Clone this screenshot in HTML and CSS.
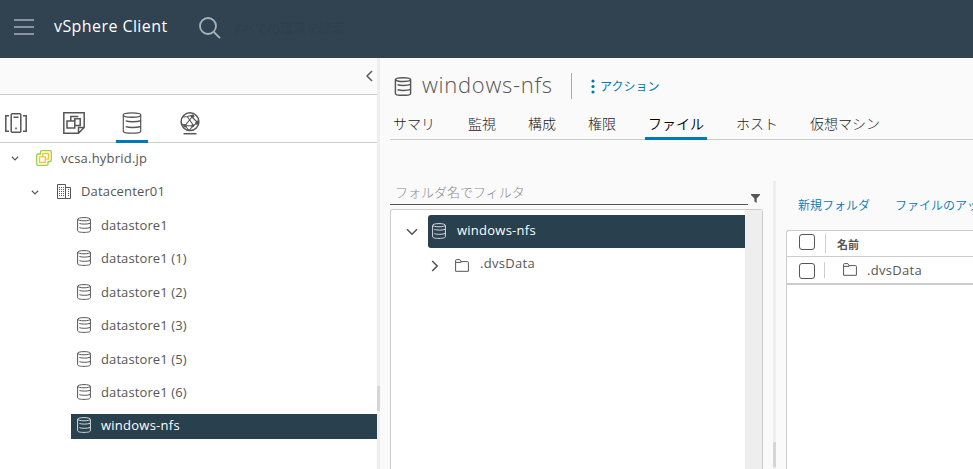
FILE: index.html
```html
<!DOCTYPE html>
<html lang="ja">
<head>
<meta charset="utf-8">
<title>vSphere Client</title>
<link rel="stylesheet" href="styles.css">
</head>
<body>
<svg class="defs" aria-hidden="true">
  <symbol id="store" viewBox="0 0 14 16">
    <ellipse cx="7" cy="2.200" rx="6.400" ry="1.600"/>
    <path d="M.6 2.200v11.600c0 1 2.600 1.600 6.400 1.600s6.400-.6 6.400-1.600V2.200M2.400 6.500c2.400.8 8 .9 11-.3M2.400 10.700c2.400.8 8 .9 11-.3"/>
  </symbol>
  <symbol id="folder" viewBox="0 0 14 13">
    <path d="M.6 12.300V1.500c0-.5.3-.9.8-.9h3.400l1.300 2h6.500c.5 0 .8.3.8.8v8.900zM1 3.400h5.100V2.600"/>
  </symbol>
  <symbol id="down" viewBox="0 0 12 8"><path d="M1 1.200l5 5 5-5"/></symbol>
</svg>
<header class="topbar">
  <svg class="burger" viewBox="0 0 20 16"><path d="M0 1h20M0 8h20M0 15h20"/></svg>
  <span class="brand">vSphere Client</span>
  <svg class="search" viewBox="0 0 22 22"><circle cx="9" cy="9" r="8"/><path d="M14.800 15l6.200 6.200"/></svg>
  <span class="hint">すべての環境を検索</span>
</header>
<div class="body">
  <aside class="side">
    <div class="collapse"><svg viewBox="0 0 7 12"><path d="M6 1L1 6l5 5"/></svg></div>
    <nav class="views">
      <span class="view"><svg class="i-hosts" viewBox="0 0 22 20"><path d="M4 2.700H.8v15.600H4M18 2.700h3.200v15.600H18"/><rect x="6.200" y=".8" width="9.600" height="18.400" rx="1"/><path d="M8.500 4.200h5M11 14.500v2"/></svg></span>
      <span class="view"><svg class="i-vms" viewBox="0 0 22 22"><path d="M.8.800h20.400v14.700L15.500 21.200H.8zM15.500 21v-5.500H21M7.800 9V4.500h7.500M11.800 13.500h5.400V6.800h-5.400V9"/><rect x="4" y="9" width="7.800" height="7"/></svg></span>
      <span class="view on"><svg class="i-store" viewBox="0 0 14 16"><use href="#store"/></svg></span>
      <span class="view"><svg class="i-net" viewBox="0 0 20 23"><circle cx="10" cy="9.700" r="8.900"/><path d="M3.500 21.700h13"/><path class="thin" d="M3.200 5l4-.5L13.500 3M7.200 4.500l6 8.500M1.500 12l3.500 1.500 7-8.500M5 13.500l8 .5 4.500-3.500 1-3M12 5l5.500 5.500M5 13.500l4 5 4-4.500"/><circle class="dot" cx="12.500" cy="4.200" r="1.800"/><circle class="dot" cx="17" cy="11" r="1.800"/><circle class="dot" cx="5" cy="13.700" r="1.800"/><circle class="dot" cx="12.700" cy="13.800" r="1.500"/></svg></span>
    </nav>
    <div class="tree">
      <div class="row root"><svg class="caret"><use href="#down"/></svg><svg class="vc" viewBox="0 0 16 16"><path class="g" d="M4.500 4V2Q4.500.7 5.800.7h8.200q1.300 0 1.300 1.300v8.200q0 1.300-1.300 1.300H12v2.500q0 1.300-1.300 1.300H2Q.7 15.300.7 14V5.300Q.7 4 2 4z"/><path class="y" d="M6.800 6.800V3.500h5.700v5.700H9.300M3.500 6.800h5.800v5.700H3.500z"/></svg><span>vcsa.hybrid.jp</span></div>
      <div class="row dc"><svg class="caret"><use href="#down"/></svg><svg class="bldg" viewBox="0 0 14 15"><path d="M.5 14.500V.5h8v14zM8.500 3.500h5v11h-5"/><path class="win" d="M2.500 3v9M4.500 3v9M6.500 3v9M11.500 5v8"/></svg><span>Datacenter01</span></div>
      <div class="row ds"><svg class="st"><use href="#store"/></svg><span>datastore1</span></div>
      <div class="row ds"><svg class="st"><use href="#store"/></svg><span>datastore1 (1)</span></div>
      <div class="row ds"><svg class="st"><use href="#store"/></svg><span>datastore1 (2)</span></div>
      <div class="row ds"><svg class="st"><use href="#store"/></svg><span>datastore1 (3)</span></div>
      <div class="row ds"><svg class="st"><use href="#store"/></svg><span>datastore1 (5)</span></div>
      <div class="row ds"><svg class="st"><use href="#store"/></svg><span>datastore1 (6)</span></div>
      <div class="row ds sel"><svg class="st"><use href="#store"/></svg><span>windows-nfs</span></div>
    </div>
  </aside>
  <div class="split main-split"><i></i></div>
  <main class="main">
    <div class="title">
      <svg class="t-ico"><use href="#store"/></svg>
      <h1>windows-nfs</h1>
      <a class="actions"><svg viewBox="0 0 4 15"><circle cx="2" cy="2" r="1.600"/><circle cx="2" cy="7.500" r="1.600"/><circle cx="2" cy="13" r="1.600"/></svg>アクション</a>
    </div>
    <nav class="tabs"><a>サマリ</a><a>監視</a><a>構成</a><a>権限</a><a class="on">ファイル</a><a>ホスト</a><a>仮想マシン</a></nav>
    <div class="files">
      <section class="left">
        <div class="filter"><span class="field">フォルダ名でフィルタ</span><svg viewBox="0 0 9 9"><path d="M0 0h9v1L5.700 4.500V9L3.400 7.500v-3L0 1z"/></svg></div>
        <div class="ftree">
          <div class="fitems">
            <div class="frow"><svg class="fcaret"><use href="#down"/></svg><div class="fsel"><svg class="st"><use href="#store"/></svg><span>windows-nfs</span></div></div>
            <div class="frow child"><svg class="right" viewBox="0 0 8 12"><path d="M1.200 1l5 5-5 5"/></svg><svg class="fold"><use href="#folder"/></svg><span>.dvsData</span></div>
          </div>
          <div class="sbar"></div>
        </div>
      </section>
      <div class="split file-split"><i></i></div>
      <section class="right-pane">
        <div class="links"><a>新規フォルダ</a><a>ファイルのアップロード</a></div>
        <div class="grid">
          <div class="ghead"><b class="box"></b><i class="sep"></i><strong>名前</strong></div>
          <div class="grow"><b class="box"></b><i class="sep"></i><svg class="fold"><use href="#folder"/></svg><span>.dvsData</span></div>
        </div>
      </section>
    </div>
  </main>
</div>
</body>
</html>
```
FILE: styles.css
```css
* { box-sizing: border-box; }
body {
  margin: 0;
  width: 973px;
  height: 469px;
  overflow: hidden;
  display: flex;
  flex-direction: column;
  background: #fafafa;
  color: #565656;
  font: 13px "Open Sans", "Noto Sans CJK JP", sans-serif;
  white-space: nowrap;
}
svg { flex: none; fill: none; stroke: #565656; stroke-width: 1.2; display: block; }
.defs { position: absolute; width: 0; height: 0; }

.topbar { height: 58px; flex: none; background: #314351; display: flex; align-items: center; padding: 0 14px 4px; }
.burger { width: 20px; height: 16px; stroke: #a5afb6; stroke-width: 1.500; }
.brand { margin: -2px 0 0 20px; width: 145px; color: #fff; font-size: 16px; letter-spacing: .42px; }
.search { width: 22px; height: 22px; stroke: #a9b3ba; stroke-width: 1.800; margin-top: 2px; }
.hint { margin-left: 10px; color: #2e404d; font-size: 12.700px; }

.body { flex: 1; min-height: 0; display: flex; }
.side { width: 377px; background: #fff; display: flex; flex-direction: column; }
.collapse { height: 37px; background: #fafafa; border-bottom: 1px solid #ccc; display: flex; justify-content: flex-end; align-items: center; padding-right: 4px; }
.collapse svg { width: 7px; height: 12px; stroke-width: 1.500; }
.views { height: 48px; border-bottom: 1px solid #ccc; display: flex; gap: 26px; }
.view { width: 32px; height: 48px; display: flex; justify-content: center; align-items: center; padding-top: 8px; }
.view.on { border-bottom: 3px solid #0079b8; padding-top: 10px; }
.view svg { stroke-width: 1.500; }
.i-hosts { width: 22px; height: 20px; }
.i-vms { width: 22px; height: 22px; }
.view .i-store { width: 20px; height: 22px; stroke-width: 1; }
.i-net { width: 20px; height: 23px; }
.view:last-child { padding-top: 9px; }
.thin { stroke-width: 1.100; }
.dot { fill: #565656; stroke: none; }

.tree { padding-top: 3.800px; display: grid; grid-auto-rows: 25px; row-gap: 8.400px; }
.row { display: flex; align-items: center; }
.row span { margin: -2px 0 0 10px; letter-spacing: .1px; }
.caret { width: 8px; height: 5px; stroke-width: 1.800; }
.root { padding-left: 11px; }
.vc { width: 16px; height: 16px; margin: -2px 0 0 17px; stroke-width: 1.300; }
.g { stroke: #9bd04b; }
.y { stroke: #f7c52b; }
.root .caret, .dc .caret { margin-top: -1px; }
.root span { margin-left: 9px; letter-spacing: .22px; }
.dc { padding-left: 31px; }
.bldg { width: 14px; height: 15px; margin: -3px 0 0 18px; stroke-width: 1; }
.dc span { letter-spacing: .16px; margin-top: -3px; }
.win { stroke-dasharray: 1 1; }
.ds { margin-left: 71px; padding-left: 6px; }
.st { width: 14px; height: 16px; stroke-width: 1; margin-top: -2px; }
.sel { background: #29404e; color: #fff; }
.sel span { letter-spacing: .25px; }
.sel .st, .fsel .st { stroke: #d5dade; }

.split { width: 3px; background: #eee; flex: none; }
.split i { display: block; height: 25px; background: #d5d5d5; }
.main-split { padding-top: 328px; }

.main { flex: 1; min-width: 0; padding-left: 10px; display: flex; flex-direction: column; }
.title { height: 48px; display: flex; align-items: center; padding: 8px 0 0 4px; }
.t-ico { width: 18px; height: 19px; margin-top: 1px; }
h1 { margin: 0 0 0 10px; width: 150px; height: 26px; line-height: 23px; border-right: 1px solid #aaa; font-size: 22px; font-weight: 300; letter-spacing: .72px; }
.actions { margin-left: 19px; display: flex; gap: 5px; align-items: center; color: #0079b8; font-size: 12px; }
.actions svg { width: 4px; height: 15px; fill: #0079b8; stroke: none; }
.tabs { height: 34px; border-bottom: 1px solid #ccc; display: flex; gap: 26px; font-size: 14px; font-weight: 300; line-height: 36px; color: #222; }
.tabs a { height: 34px; padding: 0 3px; }
.tabs a:nth-child(n+2) { position: relative; left: 1px; }
.tabs .on { color: #000; font-weight: 350; border-bottom: 3px solid #0079b8; }

.files { flex: 1; min-height: 0; padding-top: 41px; display: flex; }
.left { width: 373px; display: flex; flex-direction: column; }
.filter { height: 24px; display: flex; align-items: flex-end; gap: 3px; margin-bottom: 4px; }
.field { width: 358px; height: 24px; border-bottom: 1px solid #565656; padding-left: 5px; line-height: 22px; color: #8c8c8c; font-weight: 300; }
.filter svg { width: 9px; height: 9px; fill: #565656; stroke: none; margin-bottom: 2px; }
.ftree { flex: 1; border: 1px solid #ccc; border-bottom: 0; border-radius: 3px 3px 0 0; background: #fff; display: flex; }
.fitems { flex: 1; padding-top: 5px; }
.frow { height: 33px; display: flex; align-items: center; }
.fcaret { width: 12px; height: 8px; margin-left: 15px; stroke-width: 1.600; }
.fsel { flex: 1; margin-left: 10px; height: 33px; border-radius: 3px 0 0 3px; background: #29404e; color: #fff; display: flex; align-items: center; padding-left: 4px; }
.fsel span { margin: -3px 0 0 11px; letter-spacing: .25px; }
.child { padding-left: 40px; }
.child .right { width: 8px; height: 12px; stroke-width: 1.600; margin-top: 3px; }
.fold { width: 14px; height: 13px; margin-left: 16px; stroke-width: 1; }
.child .fold { margin-top: 1px; }
.child span { margin: -3px 0 0 11px; letter-spacing: .3px; }
.sbar { width: 17px; background: #eee; }
.file-split { margin-left: 10px; padding-top: 261px; }

.right-pane { flex: 1; min-width: 0; margin-left: 10px; display: flex; flex-direction: column; overflow: hidden; }
.links { height: 49px; padding-left: 12px; line-height: 50px; display: flex; gap: 25px; color: #0079b8; font-size: 12px; font-weight: 350; }
.grid { flex: 1; border: 1px solid #ccc; border-width: 1px 0 0 1px; border-radius: 3px 0 0 0; background: #fff; }
.ghead, .grow { display: flex; align-items: center; padding-left: 12px; }
.ghead { height: 26px; border-bottom: 1px solid #ccc; }
.grow { height: 28px; border-bottom: 2px solid #ccc; }
.box { width: 16px; height: 16px; border: 1px solid #565656; border-radius: 3px; margin-top: -3px; }
.grow .box { margin-top: 1px; }
.sep { width: 1px; height: 19px; background: #ccc; margin-left: 10px; }
.grow .sep { height: 16px; margin-left: 9px; }
strong { margin: 0 0 0 11px; font-size: 11px; }
.grow .fold { margin: -1px 0 0 18px; }
.grow span { margin-left: 10px; letter-spacing: .3px; }
```
